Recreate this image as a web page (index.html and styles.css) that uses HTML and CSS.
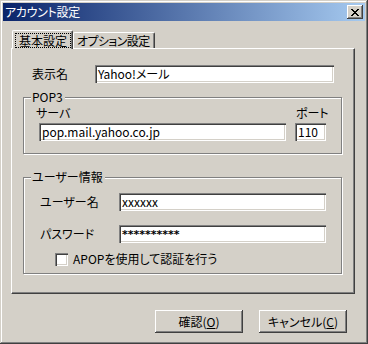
FILE: index.html
```html
<!DOCTYPE html>
<html lang="ja">
<head>
    <meta charset="UTF-8" />
    <meta name="viewport" content="width=device-width, initial-scale=1.0" />
    <title>アカウント設定</title>
    <link rel="stylesheet" href="styles.css">
</head>
<body>
    <div class="window">
        <!-- Title bar -->
        <div class="titlebar">
            <span class="title">アカウント設定</span>
            <div class="close-btn">
                <svg width="8" height="7" viewBox="0 0 8 7" shape-rendering="crispEdges">
                    <path fill="#000" d="M0 0h2v1H0zM6 0h2v1H6zM1 1h2v1H1zM5 1h2v1H5zM2 2h4v1H2zM3 3h2v1H3zM2 4h4v1H2zM1 5h2v1H1zM5 5h2v1H5zM0 6h2v1H0zM6 6h2v1H6z"/>
                </svg>
            </div>
        </div>

        <div class="content">
            <!-- Tabs -->
            <div class="tabs">
                <div class="tab active"><span class="focus">基本設定</span></div>
                <div class="tab">オプション設定</div>
            </div>

            <div class="panel">
                <!-- Display name -->
                <div class="row name-row">
                    <label class="name-label">表示名</label>
                    <div class="field name-field">Yahoo!メール</div>
                </div>

                <!-- POP3 -->
                <div class="group pop-group">
                    <div class="group-title">POP3</div>
                    <div class="pop-grid">
                        <label class="server-label">サーバ</label>
                        <label class="port-label">ポート</label>
                        <div class="field">pop.mail.yahoo.co.jp</div>
                        <div class="field">110</div>
                    </div>
                </div>

                <!-- User info -->
                <div class="group user-group">
                    <div class="group-title">ユーザー情報</div>
                    <div class="row user-row">
                        <label class="user-label">ユーザー名</label>
                        <div class="field user-field">xxxxxx</div>
                    </div>
                    <div class="row pass-row">
                        <label class="user-label">パスワード</label>
                        <div class="field user-field password">**********</div>
                    </div>
                    <div class="check-row">
                        <span class="checkbox"></span>
                        <span>APOPを使用して認証を行う</span>
                    </div>
                </div>
            </div>

            <!-- Buttons -->
            <div class="btns">
                <div class="btn">確認(<u>O</u>)</div>
                <div class="btn">キャンセル(<u>C</u>)</div>
            </div>
        </div>
    </div>
</body>
</html>
```

FILE: styles.css
```css
body {
    margin: 0;
    padding: 0;
    background-color: #d4d0c8;
    font-family: "Noto Sans CJK JP", "Noto Sans", sans-serif;
    font-size: 12px;
    line-height: 14px;
    font-feature-settings: "palt";
    color: #000;
}
.window {
    width: 368px;
    height: 344px;
    box-sizing: border-box;
    padding: 3px;
    background: #d4d0c8;
    box-shadow: inset -1px -1px #404040, inset 1px 1px #d4d0c8, inset -2px -2px #808080, inset 2px 2px #ffffff;
}
.titlebar {
    height: 18px;
    display: flex;
    align-items: center;
    justify-content: space-between;
    padding: 0 2px 0 2px;
    background: linear-gradient(to right, #0a246a, #a6caf0);
}
.title {
    color: #ffffff;
    letter-spacing: -0.3px;
}
.close-btn {
    width: 16px;
    height: 14px;
    box-sizing: border-box;
    display: flex;
    align-items: center;
    justify-content: center;
    padding-right: 1px;
    background: #d4d0c8;
    box-shadow: inset -1px -1px #404040, inset 1px 1px #ffffff, inset -2px -2px #808080;
}
.content {
    display: flex;
    flex-direction: column;
}
.tabs {
    display: flex;
    margin: 9px 0 -1px 9px;
    position: relative;
    z-index: 1;
}
.tab {
    box-sizing: border-box;
    height: 16px;
    margin-top: 2px;
    padding: 1px 4px 0 3px;
    background: #d4d0c8;
    border-left: 1px solid #ffffff;
    border-top: 1px solid #ffffff;
    border-right: 1px solid #404040;
    border-radius: 2px 2px 0 0;
    box-shadow: inset -1px 0 #808080;
    white-space: nowrap;
    letter-spacing: -0.6px;
}
.tab.active {
    height: 19px;
    margin-top: 0;
    padding: 2px 1px 0 2px;
    letter-spacing: 0;
}
.focus {
    display: block;
    padding: 0 4px;
    outline: 1px dotted #000;
    outline-offset: -1px;
    line-height: 15px;
}
.panel {
    margin-left: 8px;
    width: 344px;
    height: 246px;
    box-sizing: border-box;
    padding: 16px 0 0 11px;
    border-left: 1px solid #ffffff;
    border-top: 1px solid #ffffff;
    border-right: 1px solid #404040;
    border-bottom: 1px solid #404040;
    box-shadow: inset -1px -1px #808080;
}
.row {
    display: flex;
    align-items: center;
}
.name-label {
    width: 72px;
    box-sizing: border-box;
    padding-left: 9px;
}
.field {
    box-sizing: border-box;
    height: 18px;
    padding: 2px 0 0 3px;
    background: #ffffff;
    box-shadow: inset 1px 1px #808080, inset 2px 2px #404040, inset -1px -1px #ffffff, inset -2px -2px #d4d0c8;
    white-space: nowrap;
    overflow: hidden;
}
.name-field {
    width: 239px;
}
.password {
    font-family: "DejaVu Sans", sans-serif;
    font-weight: bold;
    font-size: 11px;
    letter-spacing: 0;
    padding-top: 3px;
}
.group {
    box-sizing: border-box;
    width: 319px;
    border: 1px solid #808080;
    box-shadow: inset 1px 1px #ffffff, 1px 1px #ffffff;
}
.group-title {
    width: fit-content;
    margin: -8px 0 0 7px;
    padding: 0 2px 0 1px;
    background: #d4d0c8;
}
.pop-group {
    height: 57px;
    margin-top: 14px;
}
.pop-grid {
    display: grid;
    grid-template-columns: 247px 31px;
    column-gap: 9px;
    row-gap: 3px;
    padding: 2px 0 0 15px;
}
.pop-grid label {
    white-space: nowrap;
}
.server-label {
    margin-left: -3px;
}
.port-label {
    margin-left: 1px;
}
.user-group {
    height: 97px;
    margin-top: 23px;
}
.user-row {
    margin-top: 9px;
}
.pass-row {
    margin-top: 14px;
}
.user-label {
    width: 95px;
    box-sizing: border-box;
    padding-left: 16px;
}
.user-field {
    width: 207px;
}
.check-row {
    display: flex;
    align-items: center;
    gap: 5px;
    margin-top: 9px;
    padding-left: 31px;
}
.checkbox {
    width: 13px;
    height: 13px;
    box-sizing: border-box;
    background: #ffffff;
    box-shadow: inset 1px 1px #808080, inset 2px 2px #404040, inset -1px -1px #ffffff, inset -2px -2px #d4d0c8;
}
.btns {
    display: flex;
    justify-content: flex-end;
    gap: 16px;
    margin-top: 16px;
    padding-right: 18px;
}
.btn {
    width: 88px;
    height: 23px;
    box-sizing: border-box;
    display: flex;
    align-items: center;
    justify-content: center;
    background: #d4d0c8;
    box-shadow: inset -1px -1px #404040, inset 1px 1px #ffffff, inset -2px -2px #808080;
}
```
